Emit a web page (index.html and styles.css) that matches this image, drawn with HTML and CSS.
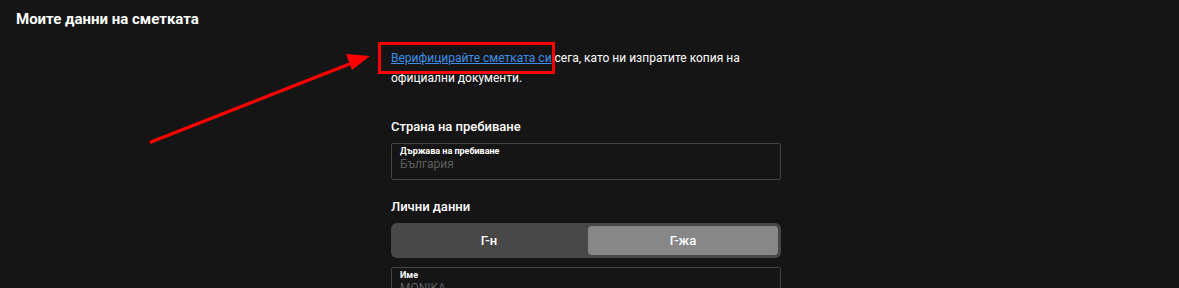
FILE: index.html
```html
<!DOCTYPE html>
<html lang="bg">
<head>
<meta charset="utf-8">
<title>Моите данни на сметката</title>
<link rel="stylesheet" href="styles.css">
</head>
<body>
<div class="page">
  <h1 class="title">Моите данни на сметката</h1>
  <div class="column">
    <p class="intro"><span class="mark"><a href="#" class="link">Верифицирайте сметката си</a></span> сега, като ни изпратите копия на официални документи.</p>

    <h2 class="section">Страна на пребиване</h2>
    <div class="field">
      <div class="field-label">Държава на пребиване</div>
      <div class="field-value">България</div>
    </div>

    <h2 class="section section-2">Лични данни</h2>
    <div class="toggle">
      <div class="opt">Г-н</div>
      <div class="opt active">Г-жа</div>
    </div>
    <div class="field field-2">
      <div class="field-label">Име</div>
      <div class="field-value">MONIKA</div>
    </div>
  </div>
  <svg class="arrow" width="240" height="100" viewBox="0 0 240 100">
    <line x1="11" y1="92" x2="212" y2="13" stroke="#ff0000" stroke-width="3.2" stroke-linecap="round"/>
    <polygon points="230,6 206,4 212,20" fill="#ff0000"/>
  </svg>
</div>
</body>
</html>
```
FILE: styles.css
```css
html, body {
  margin: 0;
  padding: 0;
  background: #151515;
  overflow: hidden;
}
body {
  font-family: Roboto, "Noto Sans", sans-serif;
  color: #ffffff;
  width: 1179px;
  height: 288px;
}
.page {
  position: relative;
  height: 288px;
  overflow: hidden;
}
.title {
  margin: 0;
  padding: 10px 0 0 16px;
  font-size: 15px;
  font-weight: 700;
  line-height: 18px;
}
.column {
  width: 390px;
  margin-left: 391px;
  padding-top: 20px;
}
.intro {
  margin: 0;
  font-size: 12px;
  line-height: 20px;
  width: 360px;
}
.mark {
  position: relative;
}
.mark::after {
  content: "";
  position: absolute;
  left: -13px;
  top: -9px;
  width: 171px;
  height: 26px;
  border: 3px solid #ff0000;
  pointer-events: none;
}
.link {
  color: #3a8fe8;
  text-decoration: underline;
}
.section {
  margin: 30px 0 0 0;
  font-size: 13px;
  font-weight: 500;
  line-height: 18px;
}
.section-2 {
  margin-top: 18px;
}
.field {
  margin-top: 7px;
  height: 35px;
  border: 1px solid #444444;
  border-radius: 2px;
  padding: 0 8px;
}
.field-label {
  font-size: 9px;
  font-weight: 700;
  line-height: 11px;
  margin-top: 2px;
}
.field-value {
  font-size: 12px;
  line-height: 14px;
  color: #5c5c5c;
}
.toggle {
  margin-top: 7px;
  display: flex;
  background: #484848;
  border-radius: 6px;
  padding: 3px;
  height: 29px;
  gap: 4px;
}
.opt {
  flex: 1;
  display: flex;
  align-items: center;
  justify-content: center;
  font-size: 13px;
  font-weight: 500;
  border-radius: 4px;
}
.opt.active {
  background: #878787;
}
.field-2 {
  margin-top: 9px;
}
.arrow {
  position: absolute;
  left: 140px;
  top: 50px;
}
```
